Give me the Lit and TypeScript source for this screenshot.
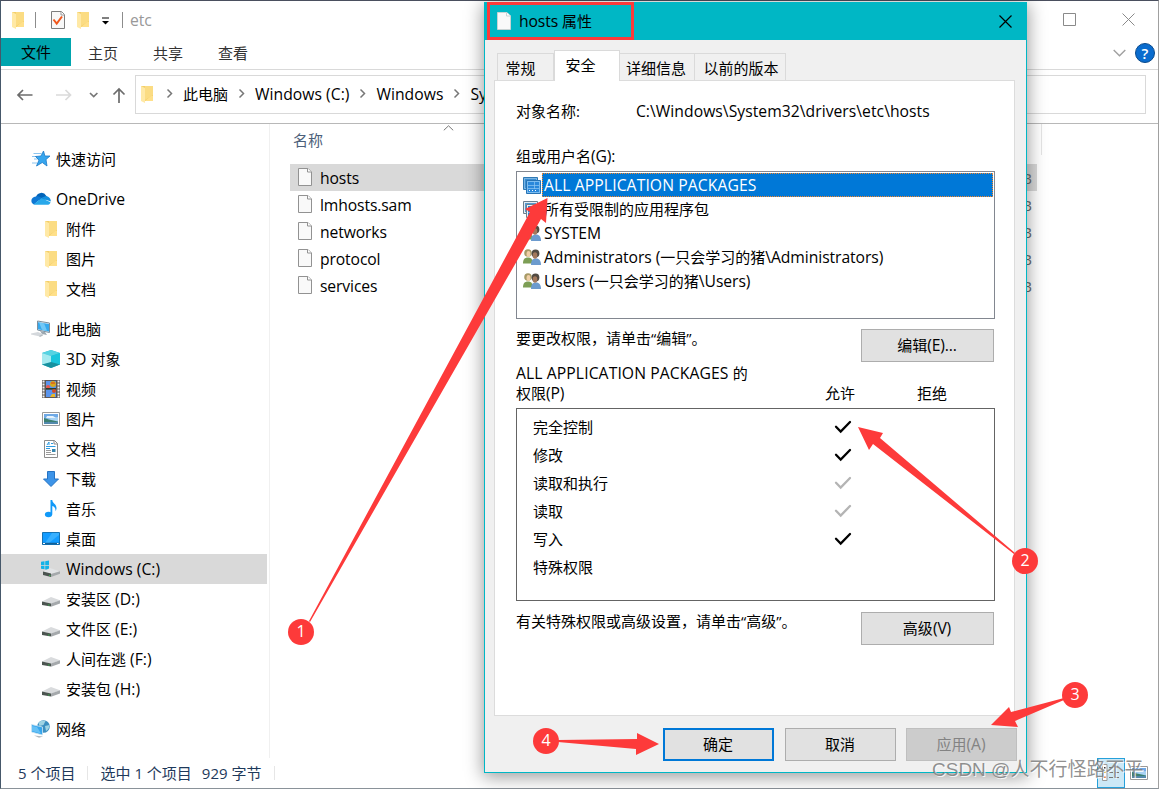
import { LitElement, html, svg, css } from "lit"
import type { TemplateResult } from "lit"
import { customElement, property } from "lit/decorators.js"
import { classMap } from "lit/directives/class-map.js"


const icons: Record<string, TemplateResult> = {
   folder: html`<svg width="18" height="18" viewBox="0 0 18 18">
      <path d="M3 1h12v15H3z" fill="#f3cf6a"/><path d="M7 1h8v9L7 15z" fill="#fbdc83"/>
      <path d="M3 1l4 2v15l-4-2z" fill="#ffe9a6"/><path d="M13 11h2v5h-8z" fill="#ffe08a"/>
   </svg>`,
   check: html`<svg width="18" height="20" viewBox="0 0 18 20">
      <path d="M2.500 1.500h10l3 3v14h-13z" fill="#f8f8f8" stroke="#7d7d7d"/><path d="M12 1.500v3.500h3.500" fill="#fff" stroke="#999"/>
      <path d="M4.500 9.500l3.200 4L13 6.500" fill="none" stroke="#f0571c" stroke-width="2"/>
   </svg>`,
   page: html`<svg width="18" height="20" viewBox="0 0 18 20">
      <path d="M2.500 1.500h9.500l3.500 3.500v13.500h-13z" fill="#f9f9f9" stroke="#929292"/><path d="M11.500 1.500V5h4" fill="#fff" stroke="#929292"/>
   </svg>`,
   star: html`<svg width="20" height="18" viewBox="0 0 20 18">
      <path d="M2.500 3.500h8M1 6.500h5M3 9h4M1 13h5" stroke="#8cc4ee" stroke-width="1"/>
      <path d="M12.500 1l1.400 5h5.100l-4 3.500 1 6.500-4.700-3.500L5.500 16l2.500-6-3.500-3.500 5.500-.5z" fill="#37a6ee" stroke="#1a79c7" stroke-width=".8"/>
   </svg>`,
   cloud: html`<svg width="20" height="14" viewBox="0 0 20 14">
      <path d="M5 5a5.500 5.500 0 0 1 10.200-1.200L17 7 8 9z" fill="#0364b8"/>
      <path d="M5 4.500c2-.6 4 .2 5.500 1.500L3 12.500C-1 11-.5 5 5 4.500z" fill="#0f78d4"/>
      <path d="M10 6l5-2c3 .5 5 3 4.800 5.500z" fill="#1490df"/>
      <path d="M2.500 12.600L10.500 6l9 4.200c-.5 1.800-1.500 2.600-3.500 2.600H4z" fill="#28a8ea"/>
   </svg>`,
   computer: html`<svg width="20" height="18" viewBox="0 0 20 18">
      <path d="M6.500 1l12 2v9.500l-12-2.500z" fill="#dfeaf2" stroke="#7e8f9c"/><path d="M7 2.200l11 1.700v7.700L7 9.200z" fill="#35a9ee"/>
      <path d="M8 2.500l5 .8 3 7.500-5-1z" fill="#72c8f6"/><path d="M9 11l5 1 2 3-5-1z" fill="#9ba7b0"/>
      <path d="M0 13.500l7-1.500 6 2.500-4 2-9-2z" fill="#d4d8dc"/><path d="M8 16l3-1.500 1 1-3 1.500z" fill="#b5bbc0"/>
   </svg>`,
   cube: html`<svg width="18" height="18" viewBox="0 0 18 18">
      <path d="M9 0l9 3v11.500L9 18l-9-3.500V3z" fill="#29b6cf"/><path d="M9 0l9 3-9 3-9-3z" fill="#55d3e2"/>
      <path d="M0 3l9 3v7l-9 1.500z" fill="#a4eaf0"/><path d="M18 3L9 6v7l9 1.500z" fill="#19c5dc"/><path d="M0 14.500L9 12l9 2.500L9 18z" fill="#17919f"/>
   </svg>`,
   video: html`<svg width="18" height="20" viewBox="0 0 18 20">
      <path d="M0 1h18v18H0z" fill="#5b5655"/><path d="M4 2h10v7.500H4zM4 10.500h10V18H4z" fill="#5a94ec"/>
      <path d="M1.500 1.500v17M16.500 1.500v17" stroke="#f2f2f2" stroke-width="2" stroke-dasharray="2 1"/>
      <circle cx="11" cy="5" r="3" fill="#d9a91c"/><path d="M9 4h4" stroke="#d83d22"/><circle cx="6" cy="8" r="2" fill="#ea5548"/>
      <path d="M4 9h10v1.500H4z" fill="#263e2c"/><circle cx="12" cy="12" r="2" fill="#d44b25"/><path d="M8 18l2-3h3v3z" fill="#e7b62b"/>
   </svg>`,
   picture: html`<svg width="18" height="14" viewBox="0 0 18 14">
      <path d="M.5.500h17v13H.5z" fill="#fff" stroke="#9a9a9a"/><path d="M2 2h14v10H2z" fill="#a9d3f4"/>
      <path d="M2 2h14v3L2 7z" fill="#6fa9e6"/><path d="M5 4h6l3 2H4z" fill="#e8f3fb"/><path d="M2 6l5 1.500 9 2V12H2z" fill="#3b7f71"/><path d="M2 10h14v2H2z" fill="#5389ad"/>
   </svg>`,
   doc: html`<svg width="18" height="20" viewBox="0 0 18 20">
      <path d="M2.500 1.500h10l3 3v14h-13z" fill="#fff" stroke="#8b8b8b"/><path d="M12 1.500V5h3.500" fill="none" stroke="#8b8b8b"/>
      <path d="M5 6l2-3v3M9 4.500h2M4 7.500h9.500M4 9.500h4" fill="none" stroke="#2f9be0"/><path d="M4 11.500h5M4 13.500h5M4 15.500h9.500" stroke="#999"/><path d="M10 10h3.500v3H10z" fill="#3686ae"/>
   </svg>`,
   download: html`<svg width="18" height="18" viewBox="0 0 18 18">
      <path d="M5.500 1.500h7v7.500h4L9 16.500 1.500 9h4z" fill="#3d94e8" stroke="#2573c3"/>
   </svg>`,
   music: html`<svg width="18" height="18" viewBox="0 0 18 18">
      <ellipse cx="6.500" cy="14.500" rx="3.600" ry="2.800" fill="#1199f8"/><path d="M8.500 0h1.800c0 3.500 4.500 4 4.200 8.500-.1 1-.5 2-1 2.800.2-3-.8-4.500-3.200-5.300V14.500H8.500z" fill="#1199f8"/>
   </svg>`,
   desktop: html`<svg width="18" height="14" viewBox="0 0 18 14">
      <path d="M.5.500h17v12H.5z" fill="#139cff" stroke="#1573b4"/><path d="M10 1h7v2L7 11H3z" fill="#38b0ff"/>
      <path d="M0 11.500h18" stroke="#125f95" stroke-width="1.500"/><path d="M1 11.500h2M15 11.500h1.500" stroke="#fff"/>
   </svg>`,
   windrive: html`<svg width="20" height="18" viewBox="0 0 20 18">
      <path d="M0 1.800l3.500-.5V5H0zM4.200 1.200L8 .6V5H4.200zM0 5.700h3.500v3.600L0 8.800zM4.200 5.700H8V10l-3.800-.5z" fill="#14b3e8"/>
      <path d="M2 11.500L9 8l10 3.500-8.500 2.500z" fill="#e2e4e6"/><path d="M2 11.500l8 2V17L2 15z" fill="#4b5450"/><path d="M10 14l9-2.800v2.500L10 17z" fill="#a5a9ac"/><path d="M8 15.500h1.500" stroke="#37b24a"/>
   </svg>`,
   drive: html`<svg width="18" height="10" viewBox="0 0 18 10">
      <path d="M0 4.500L9 0l9 3.200-9 3.500z" fill="#d9dbdd"/><path d="M0 4.500l9 2v3L0 8z" fill="#4b5450"/><path d="M9 6.500l9-3.200v3.200l-9 3.200z" fill="#a5a9ac"/><path d="M6 8h1.500" stroke="#37b24a"/>
   </svg>`,
   network: html`<svg width="20" height="18" viewBox="0 0 20 18">
      <circle cx="12.500" cy="6.500" r="6.300" fill="#3c8fc0"/><path d="M7.500 3c2-3 5-3 7-2l-2 4-4 1zM14 6l4.500-1c0 3-1.500 5-3.500 6z" fill="#9fd4e4"/>
      <path d="M.5 4.500l11 2.500v8l-11-3z" fill="#35a5ec" stroke="#d0e6f2" stroke-width=".8"/><path d="M1 6l5 1 4 6.500L1 11z" fill="#65c0f5"/><path d="M3 15.500l5 .5 4 .5-4 1.300z" fill="#b0b9bf"/>
   </svg>`,
   package: html`<svg width="18" height="17" viewBox="0 0 18 17">
      <path d="M.5.500h14v12H.5z" fill="#e4edf4" stroke="#6c7f8f"/><path d="M2 2h11v9H2z" fill="#549ad0"/>
      <path d="M3.500 3.500h14v13h-14z" fill="#eef4f9" stroke="#6c7f8f"/><path d="M5 5h11v10H5z" fill="#1687df"/>
      <path d="M6 13.500h9" stroke="#fff" stroke-dasharray="1 2"/><path d="M11.500 5v7M5 8.500h11M5 11.500h11" stroke="#a7d1f2" stroke-width=".7"/>
   </svg>`,
   packageSel: html`<svg width="18" height="17" viewBox="0 0 18 17">
      <path d="M.5.500h14v12H.5z" fill="#7bb5e4" stroke="#2f78b3"/><path d="M2 2h11v9H2z" fill="#3a8ed2"/>
      <path d="M3.500 3.500h14v13h-14z" fill="#7bbcf0" stroke="#2873b3"/><path d="M5 5h11v10H5z" fill="#2a88db"/>
      <path d="M6 13.500h9" stroke="#fff" stroke-dasharray="1 2"/><path d="M11.500 5v7M5 8.500h11M5 11.500h11" stroke="#92c8f4" stroke-width=".7"/>
   </svg>`,
   users: html`<svg width="18" height="16" viewBox="0 0 18 16">
      <path d="M0 14.500c0-4 1.500-6 5-6s4.500 2 5 6z" fill="#7d9e55"/><circle cx="5" cy="4" r="3.800" fill="#a89a66"/><ellipse cx="5.500" cy="5" rx="2" ry="3" fill="#f0cfa7"/>
      <path d="M8 16c0-4.500 1.500-6.500 5-6.500s5 2.500 5 6.500z" fill="#6c9bce"/><circle cx="12.500" cy="4.500" r="3.900" fill="#514a42"/><ellipse cx="12" cy="6.500" rx="2.300" ry="3.200" fill="#a3785c"/>
   </svg>`,
   details: html`<svg width="18" height="18" viewBox="0 0 18 18">
      <path d="M.5.500h4.500v16H.5z" fill="#fff" stroke="#999"/><path d="M2 3h1.500v1.500H2z" fill="#333"/><path d="M2 7.500h1.500V9H2z" fill="#b38b20"/><path d="M2 12.500h1.500V14H2z" fill="#c3381f"/>
      <path d="M7 3.500h4M13 3.500h4M7 8.500h4M13 8.500h4M7 13.500h4M13 13.500h4" stroke="#777"/>
   </svg>`,
}

// wraps the latin runs, they are set slightly larger than the chinese text
function mix(text: string) {
   return text.split(/([\x20-\x7e]+)/).map((run) =>
      /^[\x20-\x7e]+$/.test(run) ? html`<span class="latin">${run}</span>` : run
   )
}

const sharedText = css`
   :host {
      box-sizing: border-box;
      font-family: "Open Sans", "Noto Sans CJK SC", sans-serif;
      font-size: 15px;
      line-height: 20px;
      color: #000;
      white-space: nowrap;
   }
   * {
      box-sizing: border-box;
   }
   svg {
      display: block;
      flex: none;
   }
   .latin {
      white-space: pre;
      font-size: 15.7px;
      letter-spacing: var(--latin, -0.12px);
   }
`

interface NavItem {
   icon: string
   label: string
   level?: number
   gap?: boolean
   active?: boolean
}

const navItems: NavItem[] = [
   { icon: 'star', label: '快速访问' },
   { icon: 'cloud', label: 'OneDrive', gap: true },
   { icon: 'folder', label: '附件', level: 1 },
   { icon: 'folder', label: '图片', level: 1 },
   { icon: 'folder', label: '文档', level: 1 },
   { icon: 'computer', label: '此电脑', gap: true },
   { icon: 'cube', label: '3D 对象', level: 1 },
   { icon: 'video', label: '视频', level: 1 },
   { icon: 'picture', label: '图片', level: 1 },
   { icon: 'doc', label: '文档', level: 1 },
   { icon: 'download', label: '下载', level: 1 },
   { icon: 'music', label: '音乐', level: 1 },
   { icon: 'desktop', label: '桌面', level: 1 },
   { icon: 'windrive', label: 'Windows (C:)', level: 1, active: true },
   { icon: 'drive', label: '安装区 (D:)', level: 1 },
   { icon: 'drive', label: '文件区 (E:)', level: 1 },
   { icon: 'drive', label: '人间在逃 (F:)', level: 1 },
   { icon: 'drive', label: '安装包 (H:)', level: 1 },
   { icon: 'network', label: '网络', gap: true },
]

const files = ['hosts', 'lmhosts.sam', 'networks', 'protocol', 'services']


@customElement('explorer-window')
export class ExplorerWindow extends LitElement {
   @property({ attribute: false })
   path = ['此电脑', 'Windows (C:)', 'Windows', 'System32']

   arrow() {
      return html`<svg class="crumb-arrow" width="7" height="11" viewBox="0 0 7 11"><path d="M1.500 1.500l4 4-4 4" fill="none" stroke="#777" stroke-width="1.500"/></svg>`
   }

   render() {
      return html`
         <header class="title">
            <span class="q1">${icons.folder}</span>
            <i class="bar"></i>
            <span class="q2">${icons.check}</span>
            <span class="q3">${icons.folder}</span>
            <svg class="q4" width="9" height="8" viewBox="0 0 9 8"><path d="M1 1h7" stroke="#000"/><path d="M1 4h7L4.500 7.500z"/></svg>
            <i class="bar"></i>
            <span class="name">${mix('etc')}</span>
            <svg class="max" width="13" height="13" viewBox="0 0 13 13"><path d="M.5.500h12v12H.5z" fill="none" stroke="#8a8a8a"/></svg>
            <svg class="close" width="13" height="13" viewBox="0 0 13 13"><path d="M.5.500l12 12M12.500.500l-12 12" fill="none" stroke="#8a8a8a"/></svg>
         </header>
         <nav class="ribbon">
            <span class="file">文件</span><span class="tab">主页</span><span class="tab">共享</span><span class="tab">查看</span>
            <svg class="fold" width="13" height="8" viewBox="0 0 13 8"><path d="M.7 1l5.800 5.800L12.300 1" fill="none" stroke="#a0a0a0" stroke-width="1.400"/></svg>
            <span class="help">?</span>
         </nav>
         <div class="address">
            <svg width="134" height="53" viewBox="0 0 134 53" fill="none" stroke="#6c6c6c" stroke-width="1.700">
               <path d="M31.500 25H17M22 20l-5 5 5 5"/>
               <path d="M55 25h14.500M64.500 20l5 5-5 5" stroke="#dadada"/>
               <path d="M89 23l3.700 3.500 3.700-3.500" stroke="#777"/>
               <path d="M118 33V19.500M112.500 24.500l5.500-5.500 5.500 5.500"/>
            </svg>
            <div class="box">
               ${icons.folder}
               ${this.path.map((part) => html`${this.arrow()}<span class="crumb">${mix(part)}</span>`)}
            </div>
         </div>
         <main class="content">
            <aside class="tree">
               ${navItems.map((item) => html`
                  <div class=${classMap({ item: true, sub: !!item.level, gap: !!item.gap, active: !!item.active })}>
                     <span class="ico ${item.icon}">${icons[item.icon]}</span>
                     <span>${mix(item.label)}</span>
                  </div>
               `)}
            </aside>
            <section class="files">
               <div class="head">
                  <span>名称</span>
                  <svg width="11" height="6" viewBox="0 0 11 6"><path d="M.8 5.300l4.700-4.500 4.700 4.500" fill="none" stroke="#777"/></svg>
               </div>
               ${files.map((name, i) => html`
                  <div class=${classMap({ row: true, selected: i === 0 })}>
                     ${icons.page}<span>${mix(name)}</span><span class="size">1 KB</span>
                  </div>
               `)}
            </section>
         </main>
         <footer class="status">
            <span>5 个项目</span><i></i><span class="picked">选中 1 个项目</span><span class="bytes">929 字节</span><i class="end"></i>
            <span class="view on">${icons.details}</span>
            <span class="view">${icons.picture}</span>
         </footer>
      `
   }

   static styles = [sharedText, css`
      :host {
         display: flex;
         flex-direction: column;
         width: 1159px;
         height: 789px;
         background: #fff;
         border: 1px solid #46586a;
         border-top-color: #4a4f5e;
         border-right-color: #a0a0a0;
         border-bottom-color: #8a9299;
      }
      .title {
         display: flex;
         align-items: center;
         height: 37px;
         padding: 0 23px 0 8px;
      }
      .bar {
         width: 1px;
         height: 16px;
         background: #8c8c8c;
      }
      .q1 { margin-right: 8px; }
      .q2 { margin-left: 13px; }
      .q3 { margin-left: 7px; }
      .q4 { margin: 2px 12px 0 9px; }
      .name {
         margin-left: 7px;
         color: #999;
      }
      .max { margin: 0 46px 0 auto; }
      .ribbon {
         display: flex;
         align-items: flex-start;
         height: 32px;
         border-bottom: 1px solid #d9d9d9;
         line-height: 31px;
         color: #333;
      }
      .file {
         width: 70px;
         height: 28px;
         line-height: 29px;
         text-align: center;
         background: #00a5ae;
         color: #000;
      }
      .tab {
         width: 65px;
         padding-left: 17px;
      }
      .fold { margin: 11px 9px 0 auto; }
      .help {
         width: 20px;
         height: 20px;
         margin: 5px 3px 0 0;
         border-radius: 50%;
         border: 1px solid #0a4a8c;
         background: #0a6cce;
         color: #fff;
         font-weight: 600;
         line-height: 18px;
         text-align: center;
      }
      .address {
         display: flex;
         height: 54px;
         border-bottom: 1px solid #b8b8b8;
      }
      .box {
         display: flex;
         align-items: center;
         width: 1011px;
         height: 39px;
         margin-top: 5px;
         padding: 0 0 2px 2px;
         border: 1px solid #d9d9d9;
         --latin: 0.03px;
      }
      .crumb-arrow { margin: 0 10px; }
      .content {
         display: flex;
         flex: 1;
      }
      .tree {
         width: 269px;
         padding-top: 20px;
         border-right: 1px solid #f0f0f0;
         --latin: 0px;
      }
      .item {
         display: flex;
         align-items: center;
         width: 266px;
         height: 30px;
         padding-left: 29px;
      }
      .sub { padding-left: 39px; }
      .gap { margin-top: 10px; }
      .active { background: #d9d9d9; }
      .ico {
         display: flex;
         justify-content: center;
         width: 22px;
         margin-right: 4px;
      }
      .drive { padding-top: 6px; }
      .files {
         width: 772px;
         padding-left: 20px;
         background: linear-gradient(#e5e5e5, #e5e5e5) right top / 1px 31px no-repeat;
      }
      .head {
         display: flex;
         height: 40px;
         padding: 6px 0 0 3px;
         color: #4c607a;
      }
      .head svg { margin: -5px 0 0 120px; }
      .row {
         display: flex;
         align-items: center;
         width: 747px;
         height: 27px;
         padding: 1px 5px 0 6px;
      }
      .row svg { margin: -2px 6px 0 0; }
      .selected { background: #d9d9d9; }
      .size {
         margin-left: auto;
         color: #6d6d6d;
      }
      .status {
         display: flex;
         align-items: center;
         height: 30px;
         padding: 0 10px 1px 17px;
         color: #1e395b;
      }
      .status i {
         width: 1px;
         height: 14px;
         margin: 0 12px;
         background: #e6e6e6;
      }
      .bytes { margin-left: 10px; }
      .view {
         display: flex;
         flex: none;
         align-items: center;
         justify-content: center;
         width: 28px;
         height: 29px;
      }
      .on {
         height: 30px;
         margin: 1px 5px 0 auto;
         border: 1px solid #26a0da;
         background: #cce8f6;
      }
      .on + .view { width: 18px; }
   `]
}


const principals = [
   { icon: 'packageSel', name: 'ALL APPLICATION PACKAGES' },
   { icon: 'package', name: '所有受限制的应用程序包' },
   { icon: 'users', name: 'SYSTEM' },
   { icon: 'users', name: 'Administrators (一只会学习的猪\\Administrators)' },
   { icon: 'users', name: 'Users (一只会学习的猪\\Users)' },
]

const permissions = [
   { name: '完全控制', allow: 'own' },
   { name: '修改', allow: 'own' },
   { name: '读取和执行', allow: 'inherited' },
   { name: '读取', allow: 'inherited' },
   { name: '写入', allow: 'own' },
   { name: '特殊权限', allow: '' },
]

@customElement('properties-dialog')
export class PropertiesDialog extends LitElement {
   @property()
   file = 'C:\\Windows\\System32\\drivers\\etc\\hosts'

   tick(kind: string) {
      if (!kind) return html``
      return html`<svg class="tick" width="18" height="14" viewBox="0 0 18 14"><path d="M2 6.800l4.700 4.700L16 2" fill="none" stroke=${kind === 'own' ? '#000' : '#b4b4b4'} stroke-width="2.300" stroke-linecap="round"/></svg>`
   }

   render() {
      return html`
         <header class="title">
            <span class="doc-icon">${icons.page}</span><span class="caption">${mix('hosts 属性')}</span>
            <svg class="close" width="13" height="13" viewBox="0 0 13 13"><path d="M.5.500l12 12M12.500.500l-12 12" stroke="#000" stroke-width="1.200"/></svg>
         </header>
         <div class="tabs">
            <span class="tab t1">常规</span><span class="tab t2">安全</span><span class="tab t3">详细信息</span><span class="tab t4">以前的版本</span>
         </div>
         <section class="panel">
            <div class="object"><span>对象名称:</span><span class="path">${mix(this.file)}</span></div>
            <div class="label">${mix('组或用户名(G):')}</div>
            <div class="list">
               ${principals.map((p, i) => html`
                  <div class="principal">${icons[p.icon]}<span class=${classMap({ pname: true, picked: i === 0 })}>${mix(p.name)}</span></div>
               `)}
            </div>
            <div class="hint"><span>要更改权限，请单击“编辑”。</span><button class="btn">${mix('编辑(E)...')}</button></div>
            <div class="perm-head">
               <span class="for"><span class="caps">${mix('ALL APPLICATION PACKAGES 的')}</span><br>${mix('权限(P)')}</span><span class="col">允许</span><span class="col">拒绝</span>
            </div>
            <div class="perms">
               ${permissions.map((p) => html`<div class="perm"><span class="perm-name">${p.name}</span>${this.tick(p.allow)}</div>`)}
            </div>
            <div class="hint"><span>有关特殊权限或高级设置，请单击“高级”。</span><button class="btn">${mix('高级(V)')}</button></div>
         </section>
         <footer class="actions">
            <button class="btn primary">确定</button>
            <button class="btn">取消</button>
            <button class="btn" disabled>${mix('应用(A)')}</button>
         </footer>
      `
   }

   static styles = [sharedText, css`
      :host {
         display: flex;
         flex-direction: column;
         background: #f0f0f0;
         border: 1px solid #00b7c5;
         box-shadow: 0 3px 17px 1px rgb(0 0 0 / 0.4);
      }
      .title {
         display: flex;
         align-items: center;
         height: 37px;
         padding: 0 14px 1px 10px;
         background: #00b7c5;
      }
      .doc-icon path { stroke: #c9d3d4; }
      .caption { margin-left: 6px; }
      .close { margin-left: auto; }
      .tabs {
         display: flex;
         align-items: flex-end;
         height: 41px;
         padding-left: 12px;
      }
      .tab {
         height: 28px;
         border: 1px solid #dadada;
         border-left: 0;
         line-height: 29px;
         text-align: center;
      }
      .t1 {
         width: 57px;
         border-left: 1px solid #dadada;
         padding-right: 10px;
      }
      .t2 {
         z-index: 1;
         width: 66px;
         height: 31px;
         padding-right: 13px;
         border-left: 1px solid #dadada;
         border-bottom: 0;
         background: #fff;
      }
      .t3 {
         width: 75px;
         padding-right: 2px;
      }
      .t4 {
         width: 91px;
         padding-left: 2px;
      }
      .panel {
         width: 521px;
         height: 636px;
         margin: -1px 0 0 9px;
         padding: 20px 19px 0 21px;
         border: 1px solid #dcdcdc;
         background: #fff;
      }
      .object {
         display: flex;
         height: 45px;
      }
      .object .path {
         margin-left: 56px;
         --latin: 0.04px;
      }
      .label { height: 25px; }
      .list {
         height: 148px;
         padding: 1px;
         border: 1px solid #828790;
         --latin: -0.07px;
      }
      .principal {
         display: flex;
         align-items: center;
         height: 24px;
         padding-left: 5px;
      }
      .pname {
         flex: 1;
         height: 24px;
         margin-left: 1px;
         padding-left: 2px;
         line-height: 24px;
      }
      .picked {
         outline: 1px dotted #f5872b;
         outline-offset: -1px;
         background: #0078d7;
         color: #fff;
      }
      .picked, .caps { --latin: 0.1px; }
      .hint {
         display: flex;
         justify-content: space-between;
         height: 43px;
         padding: 9px 1px 0 0;
      }
      .btn {
         width: 133px;
         height: 33px;
         margin-top: 1px;
         padding: 0 1px 2px 0;
         border: 1px solid #adadad;
         background: #e1e1e1;
         font: inherit;
         color: #000;
      }
      .perm-head {
         display: flex;
         align-items: flex-end;
         height: 46px;
         padding-bottom: 5px;
      }
      .for { width: 278px; }
      .col {
         width: 92px;
         padding-left: 31px;
      }
      .perms {
         height: 193px;
         margin-bottom: 1px;
         padding: 4px 0 0 16px;
         border: 1px solid #646464;
      }
      .perm {
         display: flex;
         align-items: center;
         height: 28px;
      }
      .perm-name { width: 300px; }
      .tick { margin-left: 1px; }
      .actions {
         display: flex;
         justify-content: flex-end;
         gap: 10px;
         padding: 11px 9px 0 0;
      }
      .actions .btn { width: 111px; }
      .actions .primary {
         margin-right: 1px;
         border: 2px solid #0078d7;
      }
      .btn:disabled {
         border-color: #bfbfbf;
         background: #ccc;
         color: #838383;
      }
   `]
}


const marks = [
   { n: 1, x: 301, y: 632, arrow: '309,621 530,212 525,209 547.5,198 546,223 541,219 310,622' },
   { n: 2, x: 1025, y: 561, arrow: '858,427 883,433 880,438 1015,553 1014,554 873,444 869,450' },
   { n: 3, x: 1075, y: 695, arrow: '991,725 1009,707 1011,712 1064,698 1064,700 1015,721 1018,727' },
   { n: 4, x: 546, y: 741, arrow: '558,740 637,739 637,733 659,744 636,755 636,749 558,742' },
]

@customElement('app-root')
export class AppRoot extends LitElement {
   render() {
      return html`
         <explorer-window></explorer-window>
         <properties-dialog class="dialog"></properties-dialog>
         <div class="frame"></div>
         <svg class="marks" width="1159" height="789" viewBox="0 0 1159 789">
            ${marks.map((m) => svg`
               <polygon points=${m.arrow} />
               <circle cx=${m.x} cy=${m.y} r="13" />
               <text x=${m.x} y=${m.y + 5}>${m.n}</text>
            `)}
         </svg>
         <div class="watermark">CSDN @人不行怪路不平</div>
      `
   }

   static styles = css`
      :host {
         display: block;
         position: relative;
         width: 1159px;
         height: 789px;
         overflow: hidden;
      }
      .dialog {
         position: absolute;
         left: 484px;
         top: 2px;
         width: 543px;
         height: 771px;
      }
      .frame {
         position: absolute;
         left: 487px;
         top: 2px;
         width: 147px;
         height: 38px;
         box-sizing: border-box;
         border: 3px solid #fd3a3a;
      }
      .marks {
         position: absolute;
         left: 0;
         top: 0;
         fill: #fd3a3a;
      }
      .marks text {
         font: 16px "Open Sans", sans-serif;
         fill: #fff;
         text-anchor: middle;
      }
      .watermark {
         position: absolute;
         left: 932px;
         top: 757px;
         font: 19px/26px "Liberation Sans", "Noto Sans CJK SC", sans-serif;
         white-space: nowrap;
         color: rgb(125 125 125 / 0.85);
         text-shadow: 1px 1px 0 rgb(255 255 255 / 0.8);
      }
   `
}


declare global {
   interface HTMLElementTagNameMap {
      'app-root': AppRoot
      'explorer-window': ExplorerWindow
      'properties-dialog': PropertiesDialog
   }
}
